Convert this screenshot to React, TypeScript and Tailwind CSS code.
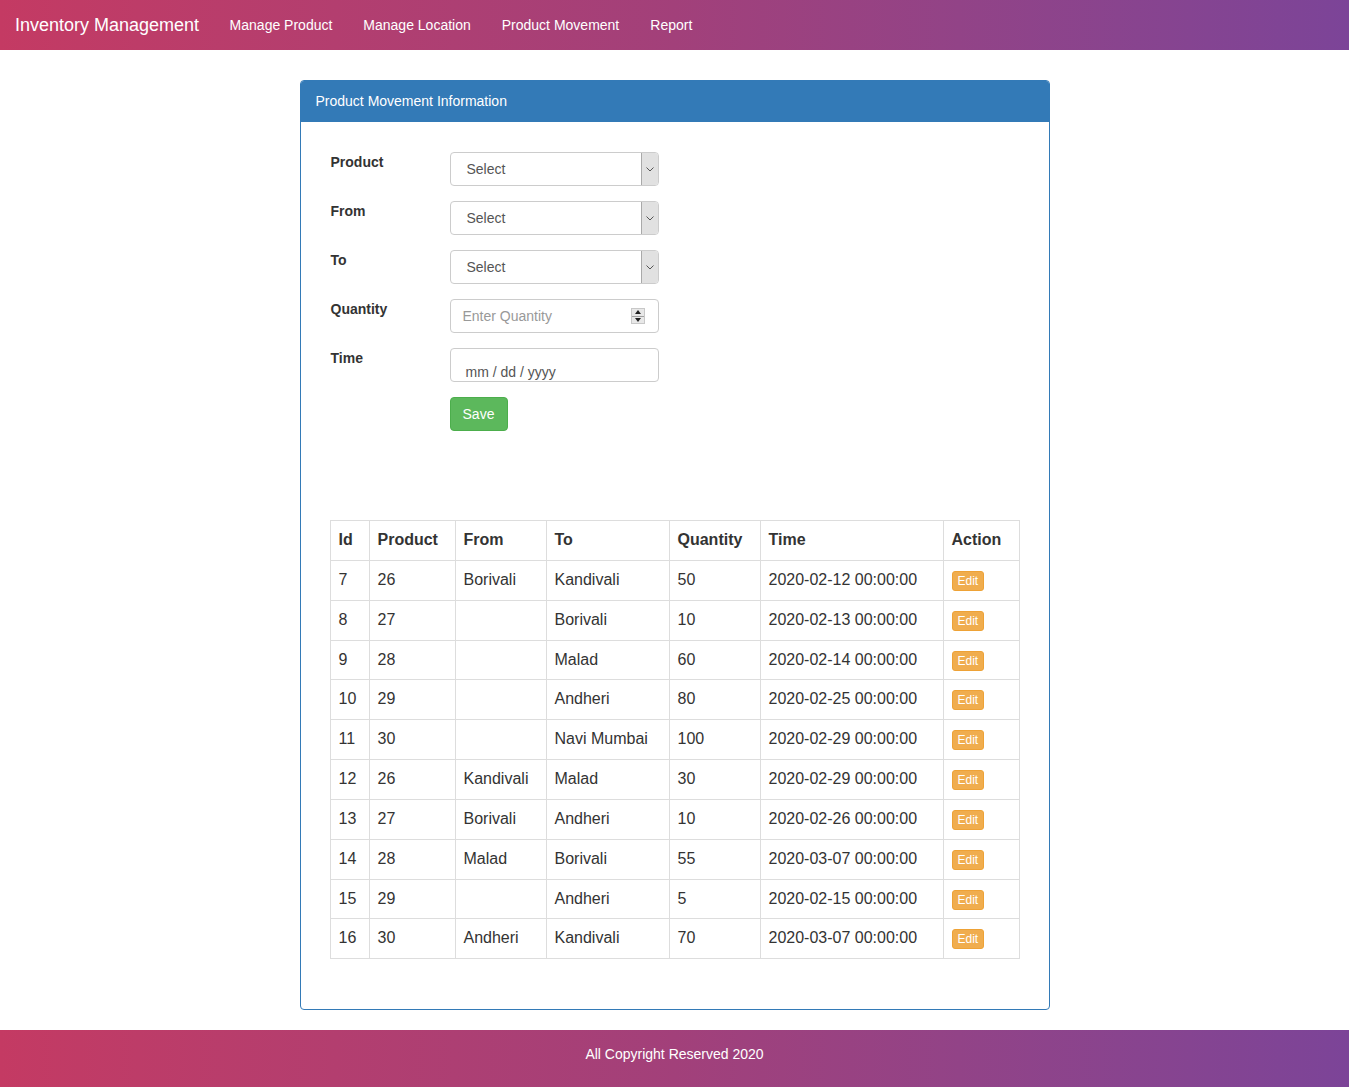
import React from 'react';

type Movement = {
  id: number;
  product: number;
  from: string;
  to: string;
  qty: number;
  time: string;
};

const movements: Movement[] = [
  { id: 7, product: 26, from: 'Borivali', to: 'Kandivali', qty: 50, time: '2020-02-12 00:00:00' },
  { id: 8, product: 27, from: '', to: 'Borivali', qty: 10, time: '2020-02-13 00:00:00' },
  { id: 9, product: 28, from: '', to: 'Malad', qty: 60, time: '2020-02-14 00:00:00' },
  { id: 10, product: 29, from: '', to: 'Andheri', qty: 80, time: '2020-02-25 00:00:00' },
  { id: 11, product: 30, from: '', to: 'Navi Mumbai', qty: 100, time: '2020-02-29 00:00:00' },
  { id: 12, product: 26, from: 'Kandivali', to: 'Malad', qty: 30, time: '2020-02-29 00:00:00' },
  { id: 13, product: 27, from: 'Borivali', to: 'Andheri', qty: 10, time: '2020-02-26 00:00:00' },
  { id: 14, product: 28, from: 'Malad', to: 'Borivali', qty: 55, time: '2020-03-07 00:00:00' },
  { id: 15, product: 29, from: '', to: 'Andheri', qty: 5, time: '2020-02-15 00:00:00' },
  { id: 16, product: 30, from: 'Andheri', to: 'Kandivali', qty: 70, time: '2020-03-07 00:00:00' },
];

const navLinks = ['Manage Product', 'Manage Location', 'Product Movement', 'Report'];

// fake select, drawn like the old browser control in the screenshot
const SelectBox = () => (
  <div className="flex h-[34px] w-[209px] items-stretch rounded border border-[#ccc] bg-white">
    <span className="flex flex-1 items-center pl-4 text-[14px] text-[#555]">Select</span>
    <span className="flex w-[17px] items-center justify-center rounded-r-[3px] border-l border-[#a9a9a9] bg-[#e1e1e1]">
      <svg width="8" height="5" viewBox="0 0 8 5">
        <path d="M0.5 0.5 L4 4 L7.5 0.5" fill="none" stroke="#555" strokeWidth="1" />
      </svg>
    </span>
  </div>
);

const FormRow = ({ label, children }: { label: string; children: React.ReactNode }) => (
  <div className="flex">
    <label className="w-[120px] pl-px text-[14px] font-bold leading-5 text-[#333]">{label}</label>
    {children}
  </div>
);

const cell = 'border border-[#ddd] px-2 py-2 align-top';

const App = () => {
  return (
    <div className="min-h-screen bg-white font-['Liberation_Sans',Arial,sans-serif] text-[14px] text-[#333]">
      {/* Navbar */}
      <nav className="flex h-[50px] items-center bg-gradient-to-r from-[#c43a63] via-[#a2407a] to-[#7c4498] text-white">
        <span className="px-[15px] text-[18px] leading-5">Inventory Management</span>
        {navLinks.map(link => (
          <a key={link} className="px-[15.5px] text-[14px] leading-5">
            {link}
          </a>
        ))}
      </nav>

      {/* Panel */}
      <div className="mx-auto mt-[30px] mb-[20px] w-[750px] rounded border border-[#337ab7]">
        <div className="flex h-[41px] items-center rounded-t-[3px] bg-[#337ab7] px-[15px] text-[14px] text-white">
          Product Movement Information
        </div>

        <div className="px-[29px] pt-[30px] pb-[50px]">
          <form className="flex flex-col gap-[15px]" onSubmit={e => e.preventDefault()}>
            <FormRow label="Product">
              <SelectBox />
            </FormRow>
            <FormRow label="From">
              <SelectBox />
            </FormRow>
            <FormRow label="To">
              <SelectBox />
            </FormRow>
            <FormRow label="Quantity">
              <div className="flex h-[34px] w-[209px] items-center rounded border border-[#ccc] bg-white pl-3 pr-[13px]">
                <span className="flex-1 text-[14px] text-[#999]">Enter Quantity</span>
                <span className="flex h-[16px] w-[14px] flex-col border border-[#c8c8c8] bg-[#e8e8e8]">
                  <span className="flex flex-1 items-center justify-center border-b border-[#a0a0a0]">
                    <svg width="6" height="4" viewBox="0 0 6 4"><path d="M0 4 L3 0 L6 4 Z" fill="#222" /></svg>
                  </span>
                  <span className="flex flex-1 items-center justify-center">
                    <svg width="6" height="4" viewBox="0 0 6 4"><path d="M0 0 L3 4 L6 0 Z" fill="#222" /></svg>
                  </span>
                </span>
              </div>
            </FormRow>
            <FormRow label="Time">
              <div className="flex h-[34px] w-[209px] items-end rounded border border-[#ccc] bg-white pb-px pl-[15px]">
                <span className="text-[14px] leading-4 text-[#555]">mm / dd / yyyy</span>
              </div>
            </FormRow>
            <div className="pl-[120px]">
              <button
                type="submit"
                className="h-[34px] w-[58px] rounded border border-[#4cae4c] bg-[#5cb85c] text-[14px] text-white"
              >
                Save
              </button>
            </div>
          </form>

          <table className="mt-[89px] w-[690px] border-collapse border border-[#ddd] text-[16px] leading-[1.42857] text-[#333]">
            <thead>
              <tr>
                <th className={`${cell} w-[39px] text-left font-bold`}>Id</th>
                <th className={`${cell} w-[86px] text-left font-bold`}>Product</th>
                <th className={`${cell} w-[91px] text-left font-bold`}>From</th>
                <th className={`${cell} w-[123px] text-left font-bold`}>To</th>
                <th className={`${cell} w-[91px] text-left font-bold`}>Quantity</th>
                <th className={`${cell} w-[183px] text-left font-bold`}>Time</th>
                <th className={`${cell} text-left font-bold`}>Action</th>
              </tr>
            </thead>
            <tbody>
              {movements.map(m => (
                <tr key={m.id}>
                  <td className={cell}>{m.id}</td>
                  <td className={cell}>{m.product}</td>
                  <td className={cell}>{m.from}</td>
                  <td className={cell}>{m.to}</td>
                  <td className={cell}>{m.qty}</td>
                  <td className={cell}>{m.time}</td>
                  <td className={cell}>
                    <button className="inline-block rounded-[3px] border border-[#eea236] bg-[#f0ad4e] px-[5px] align-baseline text-[12px] leading-[18px] text-white">
                      Edit
                    </button>
                  </td>
                </tr>
              ))}
            </tbody>
          </table>
        </div>
      </div>

      {/* Footer */}
      <footer className="h-[57px] bg-gradient-to-r from-[#c43a63] via-[#a2407a] to-[#7c4498] pt-[14px] text-center text-[14px] leading-5 text-white">
        All Copyright Reserved 2020
      </footer>
    </div>
  );
};

export default App;
